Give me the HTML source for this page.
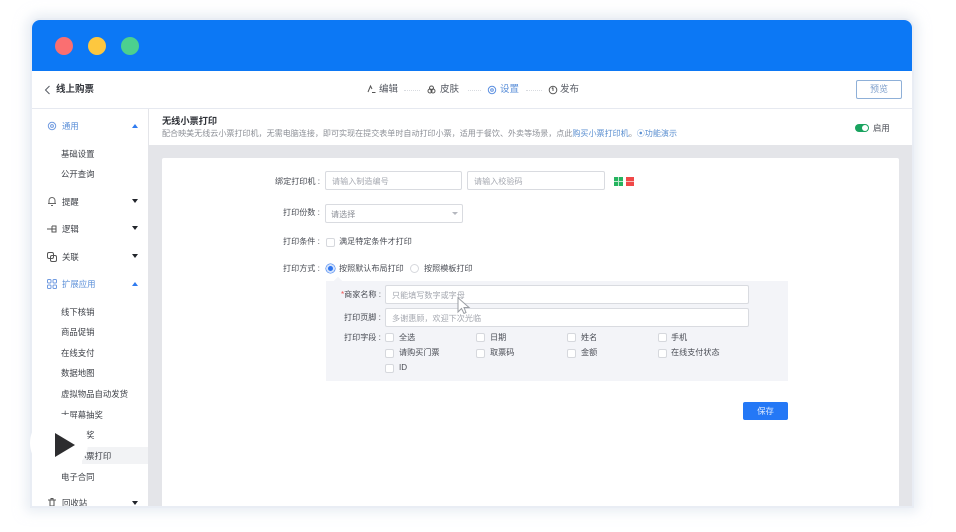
<!DOCTYPE html>
<html lang="zh"><head><meta charset="utf-8"><style>
html,body{margin:0;padding:0;width:956px;height:532px;overflow:hidden;background:#fff}
*{box-sizing:border-box}
body{font-family:"Liberation Sans","Noto Sans CJK SC",sans-serif;color:#4a4d55;position:relative}
.a,.t{position:absolute}
.t{white-space:nowrap;font-size:8.1px;line-height:12px;height:12px;filter:blur(.3px)}
.in{position:absolute;background:#fff;border:1px solid #d9dbe0;border-radius:2px;height:19px;font-size:8.1px;line-height:19px;color:#a5a8b0;padding-left:6px;white-space:nowrap}
.cb{position:absolute;width:9px;height:9px;background:#fff;border:1px solid #d6d8dd;border-radius:2px}
.t.nav{color:#3d4047;font-size:8.4px}
.t.blue{color:#5b8fd8;font-size:8.4px}
.arr{position:absolute;width:0;height:0;border-left:3.5px solid transparent;border-right:3.5px solid transparent}
.dn{border-top:4px solid #22252b}.up{border-bottom:4px solid #2f7bf0}
svg{position:absolute;fill:none;stroke-width:1;filter:blur(.2px)}
</style></head><body>
<div class="a" id="w" style="left:32px;top:20px;width:880px;height:486px;background:#fff;border-radius:8px 8px 0 0;box-shadow:0 0 0 2px #e9edf4,0 0 12px 6px rgba(214,222,234,.55)">
<div class="a" style="left:0;top:0;width:880px;height:51px;background:#0c78f5;border-radius:8px 8px 0 0"></div>
<div class="a" style="left:23px;top:17px;width:18px;height:18px;border-radius:50%;background:#fa6f71"></div>
<div class="a" style="left:56px;top:17px;width:18px;height:18px;border-radius:50%;background:#fdc73f"></div>
<div class="a" style="left:89px;top:17px;width:18px;height:18px;border-radius:50%;background:#4cd08f"></div>
<div class="a" style="left:0;top:88px;width:880px;height:1px;background:#e6e9f0"></div>
<div class="a" style="left:116px;top:89px;width:764px;height:397px;background:#e4e5e9"></div>
<div class="a" style="left:117px;top:89px;width:763px;height:56px;background:#fff"></div>
<div class="a" style="left:117px;top:125px;width:763px;height:20px;background:#e4e5e9"></div>
<div class="a" style="left:130px;top:138px;width:737px;height:348px;background:#fff;border-radius:2px 2px 0 0"></div>
</div>
<svg style="left:44px;top:85px" width="8" height="10" stroke="#555a63"><path d="M5.5 1L1.5 5L5.5 9"/></svg>
<div class="t" style="left:56px;top:84px;font-size:9.5px;font-weight:700;color:#33363c">线上购票</div>

<svg style="left:367px;top:84px" width="9" height="10" stroke="#555"><path d="M1 8L3.5 2L5 5M5 8.5H8.5"/></svg>
<div class="t" style="left:379px;top:84px;font-size:9.5px;color:#555962">编辑</div>
<div class="a" style="left:404px;top:90px;width:16px;border-top:1px dotted #d8dbe0"></div>
<svg style="left:427px;top:85px" width="9" height="10" stroke="#555"><circle cx="4.5" cy="3" r="2"/><circle cx="3" cy="6" r="2"/><circle cx="6" cy="6" r="2"/></svg>
<div class="t" style="left:440px;top:84px;font-size:9.5px;color:#555962">皮肤</div>
<div class="a" style="left:468px;top:90px;width:13px;border-top:1px dotted #d8dbe0"></div>
<svg style="left:487px;top:85px" width="10" height="10" stroke="#5b8fe0"><circle cx="5" cy="5" r="3.7"/><circle cx="5" cy="5" r="1.3"/></svg>
<div class="t" style="left:500px;top:84px;font-size:9.5px;color:#5b8fd8">设置</div>
<div class="a" style="left:526px;top:90px;width:16px;border-top:1px dotted #d8dbe0"></div>
<svg style="left:548px;top:85px" width="10" height="10" stroke="#555"><circle cx="5" cy="5" r="3.8"/><path d="M5 2.5V6M3.8 3.5L5 2.5"/></svg>
<div class="t" style="left:560px;top:84px;font-size:9.5px;color:#555962">发布</div>
<div class="a" style="left:856px;top:80px;width:46px;height:19px;border:1px solid #8fb0d8;border-radius:2px;background:#fff;color:#7fa0cc;font-size:9px;line-height:17px;text-align:center">预览</div>

<svg style="left:47px;top:121px" width="10" height="10" stroke="#6f9ae0"><circle cx="5" cy="5" r="3.7"/><circle cx="5" cy="5" r="1.4"/></svg>
<div class="t blue" style="left:62px;top:120px">通用</div>
<div class="arr up" style="left:132px;top:124px"></div>
<div class="t nav" style="left:61px;top:148px">基础设置</div>
<div class="t nav" style="left:61px;top:168px">公开查询</div>
<svg style="left:47px;top:196px" width="10" height="11" stroke="#666"><path d="M2 7.5V4.5A3 3 0 0 1 8 4.5V7.5ZM1 7.5H9M4 9.5H6"/></svg>
<div class="t nav" style="left:62px;top:196px">提醒</div>
<div class="arr dn" style="left:131.500px;top:199px"></div>
<svg style="left:47px;top:224px" width="10" height="10" stroke="#555"><path d="M0 5H5M5 2H9V8H5V2M5 5H9"/></svg>
<div class="t nav" style="left:62px;top:223px">逻辑</div>
<div class="arr dn" style="left:131.500px;top:226px"></div>
<svg style="left:47px;top:252px" width="10" height="10" stroke="#555"><rect x=".5" y=".5" width="6" height="6" rx="1.5"/><rect x="3.5" y="3.5" width="6" height="6" rx="1.5"/></svg>
<div class="t nav" style="left:62px;top:251px">关联</div>
<div class="arr dn" style="left:131.500px;top:254px"></div>
<svg style="left:47px;top:279px" width="10" height="10" stroke="#6f9ae0"><rect x=".5" y=".5" width="3.5" height="3.5" rx="1"/><rect x="6" y=".5" width="3.5" height="3.5" rx="1"/><rect x=".5" y="6" width="3.5" height="3.5" rx="1"/><rect x="6" y="6" width="3.5" height="3.5" rx="1"/></svg>
<div class="t blue" style="left:62px;top:278px">扩展应用</div>
<div class="arr up" style="left:132px;top:282px"></div>
<div class="t nav" style="left:61px;top:306px">线下核销</div>
<div class="t nav" style="left:61px;top:326px">商品促销</div>
<div class="t nav" style="left:61px;top:347px">在线支付</div>
<div class="t nav" style="left:61px;top:367px">数据地图</div>
<div class="t nav" style="left:61px;top:388px">虚拟物品自动发货</div>
<div class="t nav" style="left:61px;top:409px">大屏幕抽奖</div>
<div class="t nav" style="left:61px;top:429px">现场抽奖</div>
<div class="a" style="left:82px;top:447px;width:66px;height:17px;background:#f2f3f5"></div>
<div class="t nav" style="left:61px;top:450px">无线小票打印</div>
<div class="t nav" style="left:61px;top:471px">电子合同</div>
<svg style="left:47px;top:498px" width="10" height="8" stroke="#555"><path d="M1 2H9M3 2V8H7V2M4 2V.5H6V2"/></svg>
<div class="t nav" style="left:62px;top:497px;height:9px;overflow:hidden">回收站</div>
<div class="arr dn" style="left:131.500px;top:501px"></div>
<div class="a" style="left:30px;top:414px;width:58px;height:58px;border-radius:50%;background:#fff"></div>
<div class="a" style="left:55px;top:433px;width:0;height:0;border-left:20px solid #2d2d2f;border-top:12.5px solid transparent;border-bottom:12.5px solid transparent"></div>

<div class="t" style="left:162px;top:115px;font-size:9.2px;font-weight:700;color:#2e3137">无线小票打印</div>
<div class="t" style="left:162px;top:128px;font-size:8.05px;color:#8d9097">配合映美无线云小票打印机，无需电脑连接，即可实现在提交表单时自动打印小票，适用于餐饮、外卖等场景，点此<span style="color:#5b8fd0">购买小票打印机</span>。<span style="color:#5b8fd0">⦿功能演示</span></div>
<div class="a" style="left:855px;top:124px;width:14px;height:8px;border-radius:4px;background:#19a35f"></div>
<div class="a" style="left:862px;top:125px;width:6px;height:6px;border-radius:50%;background:#fff"></div>
<div class="t" style="left:873px;top:122px;font-size:8.4px">启用</div>

<div class="t" style="left:275px;top:176px">绑定打印机 :</div>
<div class="in" style="left:325px;top:171px;width:137px">请输入制造编号</div>
<div class="in" style="left:467px;top:171px;width:138px">请输入校验码</div>
<div class="a" style="left:614px;top:177px;width:9px;height:9px;background:#26b45f"></div>
<div class="a" style="left:618px;top:177px;width:1px;height:9px;background:#bfe8cf"></div>
<div class="a" style="left:614px;top:181px;width:9px;height:1px;background:#bfe8cf"></div>
<div class="a" style="left:626px;top:177px;width:8px;height:9px;background:#f04848"></div>
<div class="a" style="left:626px;top:181px;width:8px;height:1px;background:#f7b5b5"></div>

<div class="t" style="left:283px;top:207px">打印份数 :</div>
<div class="in" style="left:325px;top:204px;width:138px;color:#8a8d95;padding-left:5px">请选择</div>
<div class="arr" style="left:452px;top:212px;border-top:3px solid #b5b8bf"></div>

<div class="t" style="left:283px;top:236px">打印条件 :</div>
<div class="cb" style="left:326px;top:238px"></div>
<div class="t" style="left:339px;top:236px">满足特定条件才打印</div>

<div class="t" style="left:283px;top:263px">打印方式 :</div>
<div class="a" style="left:326px;top:264px;width:9px;height:9px;border-radius:50%;background:#2d74ee;border:2px solid #d5e3fb;box-shadow:0 0 0 .5px #2d74ee"></div>
<div class="t" style="left:339px;top:263px">按照默认布局打印</div>
<div class="a" style="left:410px;top:264px;width:9px;height:9px;border-radius:50%;background:#fff;border:1px solid #d6d8dd"></div>
<div class="t" style="left:424px;top:263px">按照模板打印</div>

<div class="a" style="left:326px;top:281px;width:462px;height:100px;background:#f3f4f8"></div>
<div class="a" style="left:335px;top:278px;width:6px;height:6px;background:#f3f4f8;transform:rotate(45deg)"></div>
<div class="t" style="left:341px;top:289px"><span style="color:#e55">*</span>商家名称 :</div>
<div class="in" style="left:385px;top:285px;width:364px">只能填写数字或字母</div>
<div class="t" style="left:344px;top:312px">打印页脚 :</div>
<div class="in" style="left:385px;top:308px;width:364px">多谢惠顾，欢迎下次光临</div>
<div class="t" style="left:344px;top:332px">打印字段 :</div>
<div class="cb" style="left:385px;top:333px"></div><div class="t" style="left:399px;top:332px">全选</div>
<div class="cb" style="left:476px;top:333px"></div><div class="t" style="left:490px;top:332px">日期</div>
<div class="cb" style="left:567px;top:333px"></div><div class="t" style="left:581px;top:332px">姓名</div>
<div class="cb" style="left:658px;top:333px"></div><div class="t" style="left:671px;top:332px">手机</div>
<div class="cb" style="left:385px;top:349px"></div><div class="t" style="left:399px;top:347px">请购买门票</div>
<div class="cb" style="left:476px;top:349px"></div><div class="t" style="left:490px;top:347px">取票码</div>
<div class="cb" style="left:567px;top:349px"></div><div class="t" style="left:581px;top:347px">金额</div>
<div class="cb" style="left:658px;top:349px"></div><div class="t" style="left:671px;top:347px">在线支付状态</div>
<div class="cb" style="left:385px;top:364px"></div><div class="t" style="left:399px;top:362px">ID</div>
<svg style="left:456px;top:297px;fill:#fff;stroke:#9a9da3" width="18" height="22"><path d="M2 .8V15L5.5 11.5L8 16.5L10 15.5L8 10.5H13Z"/></svg>
<div class="a" style="left:743px;top:402px;width:45px;height:18px;background:#2478f6;border-radius:2px;color:#dce9fd;font-size:8.4px;line-height:18px;text-align:center">保存</div>
</body></html>
